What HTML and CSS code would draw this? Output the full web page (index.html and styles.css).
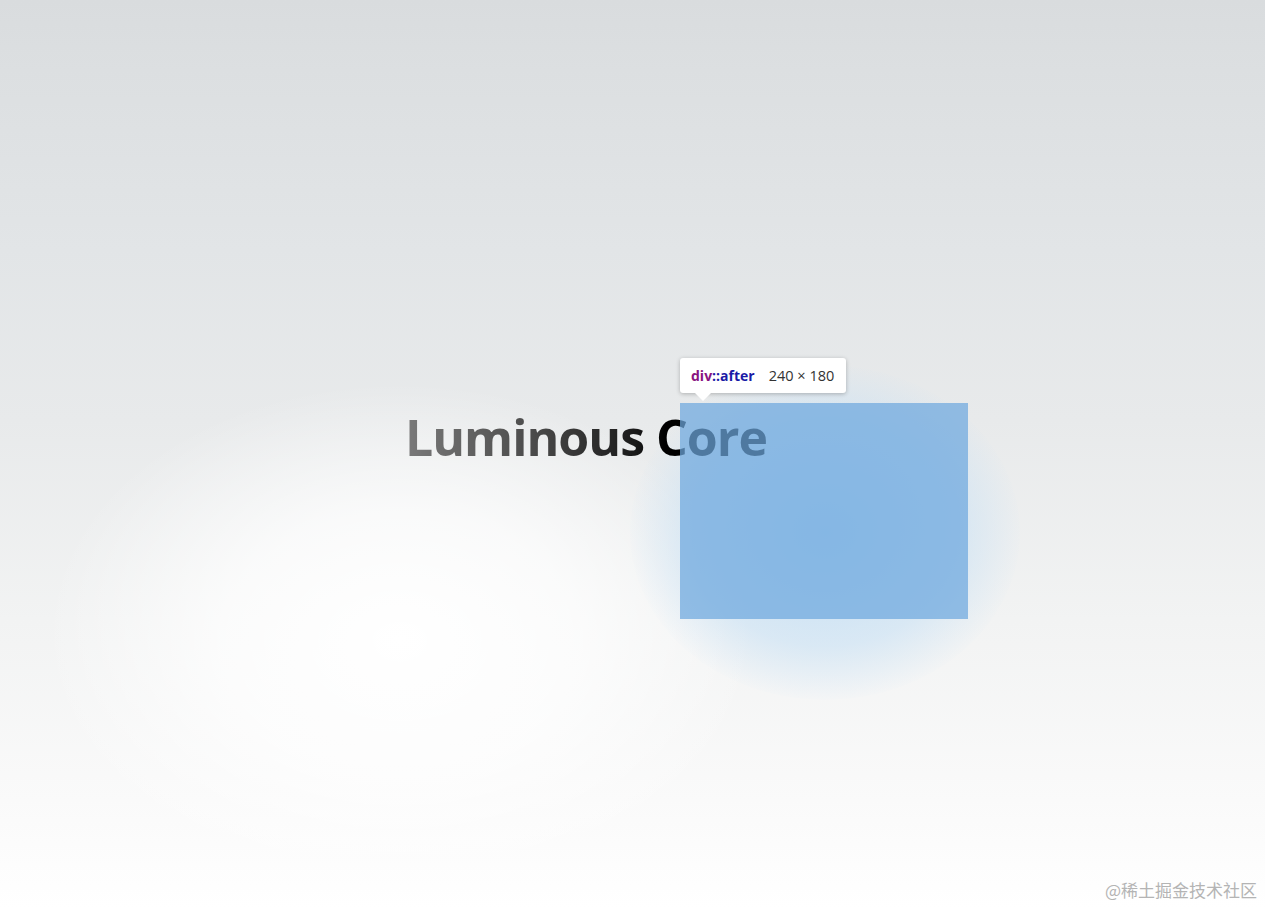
FILE: index.html
```html
<!DOCTYPE html>
<html lang="en">
<head>
<meta charset="utf-8">
<title>Luminous Core</title>
<link rel="stylesheet" href="styles.css">
</head>
<body>
<main class="stage">
  <div class="glow-white"></div>
  <div class="glow-blue"></div>
  <h1 class="title">Luminous Core</h1>
  <div class="after-box"></div>
  <div class="tip"><span class="tag">div</span><span class="pseudo">::after</span><span class="dims">240 × 180</span></div>
  <footer class="mark">@稀土掘金技术社区</footer>
</main>
</body>
</html>
```
FILE: styles.css
```css
html, body {
  margin: 0;
  padding: 0;
  height: 100%;
}
body {
  font-family: "Open Sans", "Noto Sans", sans-serif;
  background: linear-gradient(to bottom, #d9dcde 0px, #dcdfe1 70px, #e2e5e7 250px, #e8eaeb 420px, #f2f3f3 620px, #fafafa 800px, #ffffff 908px);
  overflow: hidden;
}
.stage {
  position: relative;
  height: 908px;
  box-sizing: border-box;
  padding: 400px 0 0 405px;
}
.glow-white {
  position: absolute;
  left: 40px;
  top: 380px;
  width: 720px;
  height: 520px;
  border-radius: 50%;
  background: radial-gradient(ellipse at center, rgba(255,255,255,1) 0%, rgba(255,255,255,0.7) 35%, rgba(255,255,255,0) 70%);
  pointer-events: none;
}
.glow-blue {
  position: absolute;
  left: 630px;
  top: 365px;
  width: 390px;
  height: 335px;
  border-radius: 50%;
  background: radial-gradient(ellipse at center, rgba(190,220,245,0.9) 0%, rgba(200,225,245,0.6) 48%, rgba(210,230,245,0) 72%);
  pointer-events: none;
}
.title {
  position: relative;
  margin: 0;
  font-size: 50px;
  font-weight: 700;
  line-height: 74px;
  letter-spacing: -1px;
  display: inline-block;
  background: linear-gradient(to right, #7a7a7a 0px, #4a4a4a 130px, #1a1a1a 230px, #000 260px, #000 360px);
  -webkit-background-clip: text;
  background-clip: text;
  color: transparent;
}
.after-box {
  position: absolute;
  left: 680px;
  top: 403px;
  width: 288px;
  height: 216px;
  background: rgba(110,168,222,0.72);
}
.tip {
  position: absolute;
  left: 680px;
  top: 358px;
  height: 35px;
  padding: 0 12px 0 11px;
  box-sizing: border-box;
  background: #fff;
  border-radius: 3px;
  box-shadow: 0 1px 4px rgba(0,0,0,0.25);
  display: flex;
  align-items: center;
  font-size: 14px;
  white-space: nowrap;
}
.tip::after {
  content: "";
  position: absolute;
  left: 15px;
  bottom: -8px;
  border-left: 8px solid transparent;
  border-right: 8px solid transparent;
  border-top: 8px solid #fff;
}
.tag {
  color: #881280;
  font-weight: 700;
}
.pseudo {
  color: #1a1aa6;
  font-weight: 700;
}
.dims {
  color: #333;
  margin-left: 14px;
  font-size: 14.5px;
}
.mark {
  position: absolute;
  right: 8px;
  bottom: 6px;
  color: #b4b4b4;
  font-size: 17px;
  font-family: "Noto Sans CJK SC", sans-serif;
}
```
